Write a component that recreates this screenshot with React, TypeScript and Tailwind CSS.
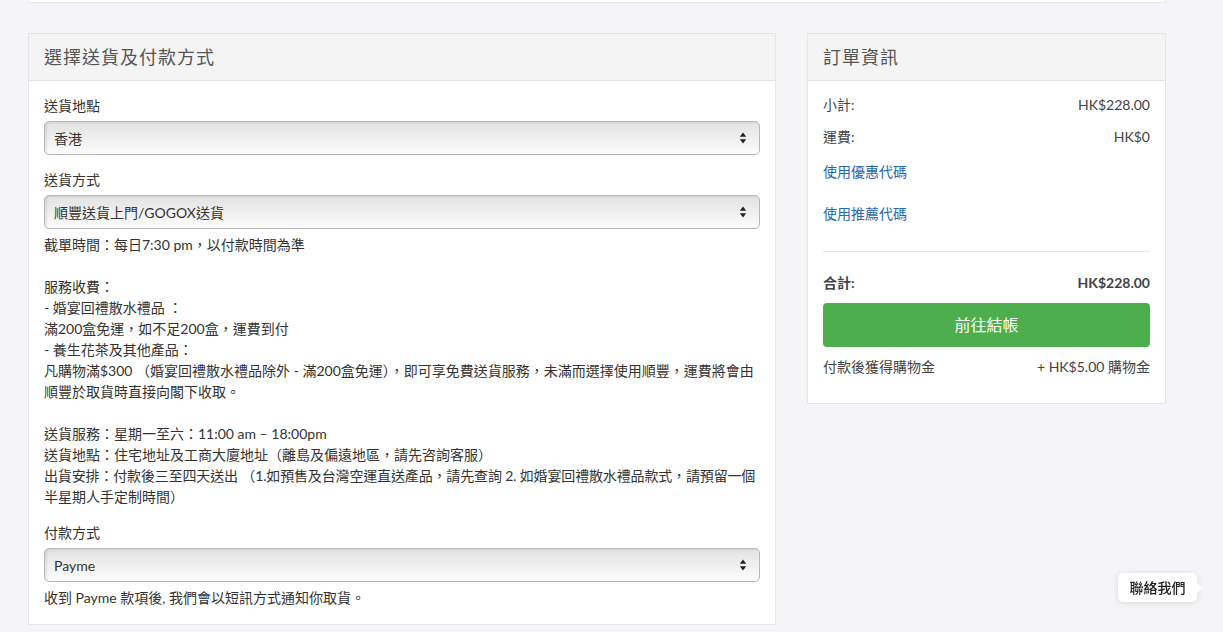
import React from "react";

const FONT = { fontFamily: "Lato, 'Noto Sans CJK TC', 'Noto Sans', sans-serif" };

function FakeSelect({ value }: { value: string }) {
  return (
    <div className="relative flex h-[34px] items-center rounded-[5px] border border-[#b8b8b8] bg-gradient-to-b from-[#e2e2e2] via-[#efefef] to-[#fcfcfc] pl-[9px] pr-[12px] text-[14px] text-[#333] shadow-[inset_2px_1px_2px_rgba(0,0,0,0.08)]">
      <span className="flex-1">{value}</span>
      <svg width="8" height="14" viewBox="0 0 8 14" className="text-[#222]">
        <path d="M4 1.5 L7.2 5.8 L0.8 5.8 Z" fill="currentColor" />
        <path d="M4 12.5 L7.2 8.2 L0.8 8.2 Z" fill="currentColor" />
      </svg>
    </div>
  );
}

function Label({ children }: { children: React.ReactNode }) {
  return <div className="mb-[5px] text-[14px] leading-[20px] text-[#333]">{children}</div>;
}

export default function App() {
  return (
    <div className="min-h-screen bg-[#f5f5f8] pb-10" style={FONT}>
      <div className="ml-[28px] w-[1138px]">
        <div className="h-[3px] rounded-b-[2px] border-x border-b border-[#e6e6ea] bg-white" />
        <div className="mt-[30px] flex items-start gap-[31px]">
          {/* Left panel */}
          <div className="w-[748px] border border-[#e6e6e6] bg-white">
            <div className="flex h-[47px] items-center border-b border-[#e4e4e4] bg-[#f4f4f4] px-[15px]">
              <h2 className="text-[18px] tracking-[1px] text-[#555]">選擇送貨及付款方式</h2>
            </div>
            <div className="px-[15px] pb-[16px] pt-[15px] text-[14px] leading-[21px] text-[#333]">
              <Label>送貨地點</Label>
              <FakeSelect value="香港" />
              <div className="mt-[15px]">
                <Label>送貨方式</Label>
                <FakeSelect value="順豐送貨上門/GOGOX送貨" />
              </div>
              <div className="mt-[5px]">
                <div>截單時間：每日7:30 pm，以付款時間為準</div>
                <div className="h-[21px]" />
                <div>服務收費：</div>
                <div>- 婚宴回禮散水禮品 ：</div>
                <div>滿200盒免運，如不足200盒，運費到付</div>
                <div>- 養生花茶及其他產品：</div>
                <div className="whitespace-nowrap">凡購物滿$300 （婚宴回禮散水禮品除外 - 滿200盒免運），即可享免費送貨服務，未滿而選擇使用順豐，運費將會由</div>
                <div>順豐於取貨時直接向閣下收取。</div>
                <div className="h-[21px]" />
                <div>送貨服務：星期一至六：11:00 am – 18:00pm</div>
                <div>送貨地點：住宅地址及工商大廈地址（離島及偏遠地區，請先咨詢客服）</div>
                <div className="whitespace-nowrap tracking-[-0.15px]">出貨安排：付款後三至四天送出 （1.如預售及台灣空運直送產品，請先查詢 2. 如婚宴回禮散水禮品款式，請預留一個</div>
                <div>半星期人手定制時間）</div>
              </div>
              <div className="mt-[16px]">
                <Label>付款方式</Label>
                <FakeSelect value="Payme" />
              </div>
              <div className="mt-[5px]">收到 Payme 款項後, 我們會以短訊方式通知你取貨。</div>
            </div>
          </div>

          {/* Right panel */}
          <div className="w-[359px] border border-[#e6e6e6] bg-white">
            <div className="flex h-[47px] items-center border-b border-[#e4e4e4] bg-[#f4f4f4] px-[15px]">
              <h2 className="text-[18px] tracking-[1px] text-[#555]">訂單資訊</h2>
            </div>
            <div className="px-[15px] pb-[26px] pt-[13px] text-[14px] text-[#444]">
              <div className="flex h-[21px] items-center justify-between">
                <span>小計:</span>
                <span>HK$228.00</span>
              </div>
              <div className="mt-[11px] flex h-[21px] items-center justify-between">
                <span>運費:</span>
                <span>HK$0</span>
              </div>
              <div className="mt-[14px] h-[21px] text-[#2a66a8]">使用優惠代碼</div>
              <div className="mt-[21px] h-[21px] text-[#2a66a8]">使用推薦代碼</div>
              <div className="mt-[27px] border-t border-[#e8e8e8]" />
              <div className="mt-[20px] flex h-[21px] items-center justify-between font-bold text-[#444]">
                <span>合計:</span>
                <span>HK$228.00</span>
              </div>
              <button className="mt-[10px] flex h-[44px] w-full items-center justify-center rounded-[4px] bg-[#4cae4c] text-[16px] text-white">
                前往結帳
              </button>
              <div className="mt-[9px] flex h-[21px] items-center justify-between">
                <span>付款後獲得購物金</span>
                <span>+ HK$5.00 購物金</span>
              </div>
            </div>
          </div>
        </div>
      </div>

      {/* Contact us bubble */}
      <div className="fixed left-[1118px] top-[573px]">
        <div className="relative flex h-[29px] w-[79px] items-center justify-center rounded-[5px] bg-white text-[14px] font-medium text-[#222] shadow-[0_1px_6px_rgba(0,0,0,0.12)]">
          聯絡我們
          <span className="absolute right-[-5px] top-[10px] h-0 w-0 border-y-[5px] border-l-[5px] border-y-transparent border-l-white" />
        </div>
      </div>
    </div>
  );
}
